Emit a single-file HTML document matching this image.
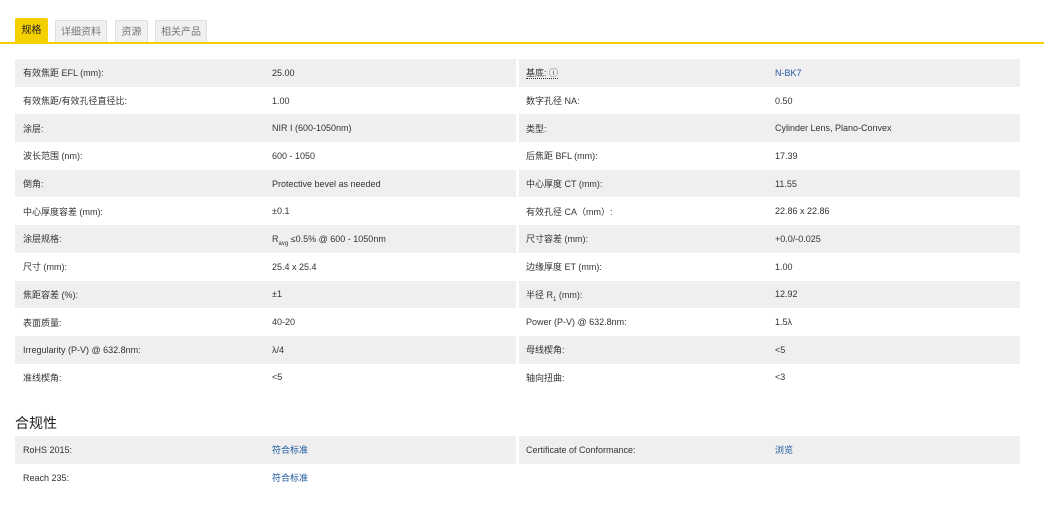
<!DOCTYPE html>
<html><head><meta charset="utf-8"><style>
body{margin:0;background:#fff;width:1044px;height:519px;overflow:hidden;font-family:"Liberation Sans","Noto Sans CJK SC",sans-serif;color:#333;}
.tabs{position:absolute;top:18px;left:0;width:1044px;height:24px;border-bottom:2px solid #f5d000;}
.tab{position:absolute;top:2px;height:22px;font-size:10px;line-height:24px;text-align:center;background:#f0f0f0;color:#777;border:1px solid #ddd;border-bottom:none;box-sizing:border-box;border-radius:2px 2px 0 0}
.tab.a{background:#f5d000;color:#222;border-color:#f5d000;top:0;height:24px}
table{position:absolute;border-collapse:collapse;font-size:9px;table-layout:fixed}
td{height:27.7px;padding:0;vertical-align:middle;box-sizing:border-box;white-space:nowrap}
tr:nth-child(odd) td{background:#efefef}
.l{padding-left:8px}
.r{padding-left:7px}
.gap{background:#fff!important}
.blue{color:#1f5aa0}
h3{position:absolute;top:413px;left:15px;margin:0;font-size:14px;font-weight:normal;color:#222}
sub{font-size:6px;line-height:0}
</style></head><body>
<div class="tabs">
<div class="tab a" style="left:15px;width:33px">规格</div>
<div class="tab" style="left:55px;width:52px">详细资料</div>
<div class="tab" style="left:115px;width:33px">资源</div>
<div class="tab" style="left:155px;width:52px">相关产品</div>
</div>
<table style="top:59px;left:15px;width:1005px">
<colgroup><col style="width:257px"><col style="width:244px"><col style="width:3px"><col style="width:256px"><col style="width:245px"></colgroup>
<tr><td class="l">有效焦距 EFL (mm):</td><td>25.00</td><td class="gap"></td><td class="r"><span style="border-bottom:1px dotted #333">基底: ⓘ</span></td><td class="blue">N-BK7</td></tr>
<tr><td class="l">有效焦距/有效孔径直径比:</td><td>1.00</td><td class="gap"></td><td class="r">数字孔径 NA:</td><td>0.50</td></tr>
<tr><td class="l">涂层:</td><td>NIR I (600-1050nm)</td><td class="gap"></td><td class="r">类型:</td><td>Cylinder Lens, Plano-Convex</td></tr>
<tr><td class="l">波长范围 (nm):</td><td>600 - 1050</td><td class="gap"></td><td class="r">后焦距 BFL (mm):</td><td>17.39</td></tr>
<tr><td class="l">倒角:</td><td>Protective bevel as needed</td><td class="gap"></td><td class="r">中心厚度 CT (mm):</td><td>11.55</td></tr>
<tr><td class="l">中心厚度容差 (mm):</td><td>±0.1</td><td class="gap"></td><td class="r">有效孔径 CA（mm）:</td><td>22.86 x 22.86</td></tr>
<tr><td class="l">涂层规格:</td><td>R<sub>avg</sub> ≤0.5% @ 600 - 1050nm</td><td class="gap"></td><td class="r">尺寸容差 (mm):</td><td>+0.0/-0.025</td></tr>
<tr><td class="l">尺寸 (mm):</td><td>25.4 x 25.4</td><td class="gap"></td><td class="r">边缘厚度 ET (mm):</td><td>1.00</td></tr>
<tr><td class="l">焦距容差 (%):</td><td>±1</td><td class="gap"></td><td class="r">半径 R<sub>1</sub> (mm):</td><td>12.92</td></tr>
<tr><td class="l">表面质量:</td><td>40-20</td><td class="gap"></td><td class="r">Power (P-V) @ 632.8nm:</td><td>1.5λ</td></tr>
<tr><td class="l">Irregularity (P-V) @ 632.8nm:</td><td>λ/4</td><td class="gap"></td><td class="r">母线楔角:</td><td>&lt;5</td></tr>
<tr><td class="l">准线楔角:</td><td>&lt;5</td><td class="gap"></td><td class="r">轴向扭曲:</td><td>&lt;3</td></tr>
</table>
<h3>合规性</h3>
<table style="top:436px;left:15px;width:1005px">
<colgroup><col style="width:257px"><col style="width:244px"><col style="width:3px"><col style="width:256px"><col style="width:245px"></colgroup>
<tr><td class="l">RoHS 2015:</td><td class="blue">符合标准</td><td class="gap"></td><td class="r">Certificate of Conformance:</td><td class="blue">浏览</td></tr>
<tr><td class="l">Reach 235:</td><td class="blue">符合标准</td><td class="gap"></td><td class="r"></td><td></td></tr>
</table>
</body></html>
